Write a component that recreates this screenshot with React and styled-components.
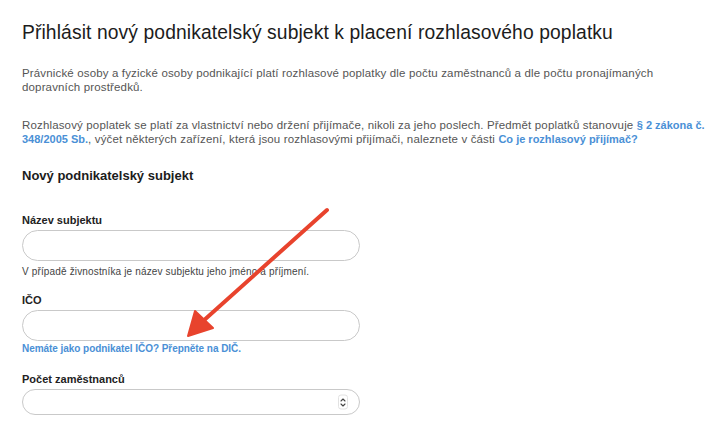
import React from "react"
import styled, { createGlobalStyle } from "styled-components"

const GlobalStyle = createGlobalStyle`
    html, body {
        margin: 0;
        padding: 0;
        background: #ffffff;
    }
    body {
        font-family: "Liberation Sans", Arial, sans-serif;
        color: #222;
    }
`

const Page = styled.main`
    position: relative;
    padding: 22px 10px 0 22px;
    width: 720px;
    height: 423px;
    box-sizing: border-box;
    overflow: hidden;
`

const Title = styled.h1`
    margin: 0 0 22px 0;
    font-size: 19.3px;
    line-height: 22px;
    font-weight: 400;
    letter-spacing: 0.1px;
    color: #1c1c1c;
`

const Lead = styled.p`
    margin: 0 0 ${props => props.gap || 20}px 0;
    font-size: 11.5px;
    line-height: 14px;
    letter-spacing: 0.15px;
    color: #555;

    a {
        color: #4a90d6;
        font-size: 11px;
        font-weight: bold;
        letter-spacing: 0;
        text-decoration: none;
    }
`

const SectionTitle = styled.h2`
    margin: 0 0 28px 0;
    font-size: 13px;
    line-height: 18px;
    font-weight: 600;
    color: #1c1c1c;
`

const Field = styled.div`
    display: flex;
    flex-direction: column;
    margin-bottom: ${props => props.gap || 16}px;
`

const Label = styled.label`
    font-size: 11px;
    line-height: 14px;
    font-weight: bold;
    color: #222;
    margin-bottom: 3px;
`

const InputWrap = styled.div`
    position: relative;
    width: 338px;
    height: ${props => props.h || 31}px;
    box-sizing: border-box;
    border: 1px solid #c9c9c9;
    border-radius: 16px;
    background: #fff;
`

const Hint = styled.div`
    margin-top: ${props => (props.link ? 2 : 5)}px;
    font-size: 10px;
    line-height: 12px;
    letter-spacing: ${props => (props.link ? "-0.05px" : "0.15px")};
    color: ${props => (props.link ? "#4a90d6" : "#444")};
    font-weight: ${props => (props.link ? "bold" : "normal")};
`

const Spinner = styled.div`
    position: absolute;
    right: 11px;
    top: 50%;
    transform: translateY(-50%);
    width: 8px;
    height: 13px;
    border: 1px solid #e2e2e2;
    border-radius: 3px;
    display: flex;
    align-items: center;
    justify-content: center;
`

const Arrow = styled.svg`
    position: absolute;
    left: 0;
    top: 0;
    pointer-events: none;
`

const App = () =>
    <>
    <GlobalStyle/>
    <Page>
        <Title>Přihlásit nový podnikatelský subjekt k placení rozhlasového poplatku</Title>
        <Lead gap={24}>Právnické osoby a fyzické osoby podnikající platí rozhlasové poplatky dle počtu zaměstnanců a dle počtu pronajímaných dopravních prostředků.</Lead>
        <Lead gap={21}>Rozhlasový poplatek se platí za vlastnictví nebo držení přijímače, nikoli za jeho poslech. Předmět poplatků stanovuje <a href="#">§ 2 zákona č. 348/2005 Sb.</a>, výčet některých zařízení, která jsou rozhlasovými přijímači, naleznete v části <a href="#">Co je rozhlasový přijímač?</a></Lead>
        <SectionTitle>Nový podnikatelský subjekt</SectionTitle>
        <Field gap={15}>
            <Label>Název subjektu</Label>
            <InputWrap/>
            <Hint>V případě živnostníka je název subjektu jeho jméno a příjmení.</Hint>
        </Field>
        <Field gap={17}>
            <Label>IČO</Label>
            <InputWrap/>
            <Hint link>Nemáte jako podnikatel IČO? Přepněte na DIČ.</Hint>
        </Field>
        <Field>
            <Label>Počet zaměstnanců</Label>
            <InputWrap h={26}>
                <Spinner>
                    <svg width="6" height="10" viewBox="0 0 6 10" fill="none" stroke="#444" strokeWidth="1.1" strokeLinecap="round" strokeLinejoin="round">
                        <path d="M1 3.5 L3 1.5 L5 3.5"/>
                        <path d="M1 6.5 L3 8.5 L5 6.5"/>
                    </svg>
                </Spinner>
            </InputWrap>
        </Field>
        <Arrow width="720" height="423" viewBox="0 0 720 423">
            <line x1="327" y1="210" x2="202" y2="322" stroke="#e8432d" strokeWidth="4" strokeLinecap="round"/>
            <polygon points="188,336 195,311 213,328" fill="#e8432d" stroke="#e8432d" strokeWidth="2" strokeLinejoin="round"/>
        </Arrow>
    </Page>
    </>

export default App
